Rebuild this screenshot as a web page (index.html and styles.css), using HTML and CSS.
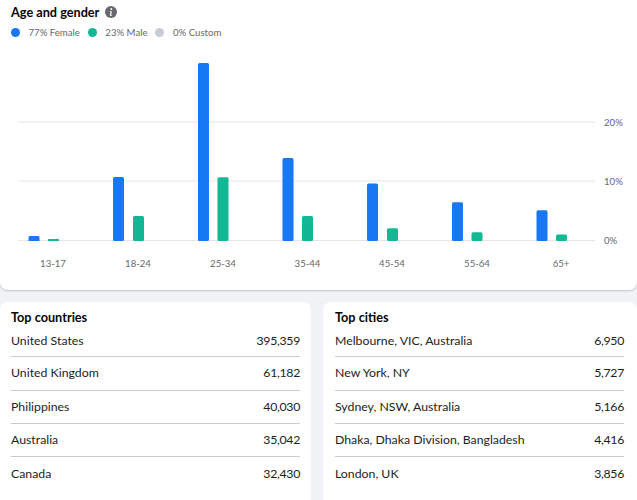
FILE: index.html
```html
<!DOCTYPE html>
<html lang="en">
<head>
<meta charset="utf-8">
<title>Audience</title>
<link rel="stylesheet" href="styles.css">
</head>
<body>
<section class="card chart-card">
  <h2 class="title">Age and gender
    <svg class="info" viewBox="0 0 12 12" width="12" height="12" aria-hidden="true"><circle cx="6" cy="6" r="6" fill="#65676b"/><circle cx="6.3" cy="3.1" r="1" fill="#fff"/><path d="M4.7 5.2h2.2L6.2 9h.9v.8H4.8L5.5 6h-.8z" fill="#fff"/></svg>
  </h2>
  <ul class="legend">
    <li class="legend-item"><span class="dot dot-female"></span>77% Female</li>
    <li class="legend-item"><span class="dot dot-male"></span>23% Male</li>
    <li class="legend-item"><span class="dot dot-custom"></span>0% Custom</li>
  </ul>
  <svg class="chart" viewBox="0 0 637 250" width="637" height="250" aria-label="Age and gender chart">
    <g class="grid">
      <line x1="18" x2="595" y1="82" y2="82"/>
      <line x1="18" x2="595" y1="141" y2="141"/>
      <line x1="18" x2="595" y1="200.5" y2="200.5"/>
    </g>
    <g class="ylabels">
      <text x="604" y="86">20%</text>
      <text x="604" y="145">10%</text>
      <text x="604" y="204">0%</text>
    </g>
    <g class="bars-f">
      <path d="M28.5 201v-3.5a1.5 1.5 0 0 1 1.5-1.5h8a1.5 1.5 0 0 1 1.5 1.5v3.500z"/>
      <rect x="113" y="137" width="11" height="64" rx="1.500"/>
      <rect x="198" y="23" width="11" height="178" rx="1.500"/>
      <rect x="282.500" y="118" width="11" height="83" rx="1.500"/>
      <rect x="367" y="143.500" width="11" height="57.500" rx="1.500"/>
      <rect x="452" y="162.300" width="11" height="38.700" rx="1.500"/>
      <rect x="536.500" y="170.300" width="11" height="30.700" rx="1.500"/>
    </g>
    <g class="bars-m">
      <rect x="48" y="199" width="11" height="2" rx="0.500"/>
      <rect x="133" y="176" width="11" height="25" rx="1.500"/>
      <rect x="217.500" y="137.300" width="11" height="63.700" rx="1.500"/>
      <rect x="302" y="176" width="11" height="25" rx="1.500"/>
      <rect x="387" y="188.300" width="11" height="12.700" rx="1.500"/>
      <rect x="471.500" y="192.300" width="11" height="8.700" rx="1.500"/>
      <rect x="556" y="194.500" width="11" height="6.500" rx="1.500"/>
    </g>
    <g class="xlabels">
      <text x="53" y="227">13-17</text>
      <text x="138" y="227">18-24</text>
      <text x="223" y="227">25-34</text>
      <text x="307.500" y="227">35-44</text>
      <text x="392" y="227">45-54</text>
      <text x="477" y="227">55-64</text>
      <text x="561" y="227">65+</text>
    </g>
  </svg>
</section>
<div class="columns">
  <section class="card list-card">
    <h2 class="title">Top countries</h2>
    <ul class="rows">
      <li class="row"><span>United States</span><span class="num">395,359</span></li>
      <li class="row"><span>United Kingdom</span><span class="num">61,182</span></li>
      <li class="row"><span>Philippines</span><span class="num">40,030</span></li>
      <li class="row"><span>Australia</span><span class="num">35,042</span></li>
      <li class="row"><span>Canada</span><span class="num">32,430</span></li>
    </ul>
  </section>
  <section class="card list-card">
    <h2 class="title">Top cities</h2>
    <ul class="rows">
      <li class="row"><span>Melbourne, VIC, Australia</span><span class="num">6,950</span></li>
      <li class="row"><span>New York, NY</span><span class="num">5,727</span></li>
      <li class="row"><span>Sydney, NSW, Australia</span><span class="num">5,166</span></li>
      <li class="row"><span>Dhaka, Dhaka Division, Bangladesh</span><span class="num">4,416</span></li>
      <li class="row"><span>London, UK</span><span class="num">3,856</span></li>
    </ul>
  </section>
</div>
</body>
</html>
```
FILE: styles.css
```css
* { box-sizing: border-box; }
html, body { margin: 0; height: 500px; overflow: hidden; }
body {
  background: #f0f2f5;
  font-family: "Lato", "Noto Sans", sans-serif;
  color: #1c1e21;
  width: 637px;
}
.card { background: #fff; }
.chart-card {
  height: 290px;
  padding-top: 4px;
  border-radius: 0 0 8px 8px;
  box-shadow: 0 1px 2px rgba(0,0,0,.2);
  overflow: hidden;
}
.title {
  margin: 0;
  padding-left: 11px;
  font-size: 12.700px;
  line-height: 16px;
  font-weight: 700;
  color: #050505;
  display: flex;
  align-items: center;
  gap: 6px;
}
.legend {
  list-style: none;
  margin: 4px 0 0;
  padding: 0 0 0 11px;
  display: flex;
  gap: 8px;
  height: 16px;
}
.legend-item {
  display: flex;
  align-items: center;
  gap: 8.500px;
  font-size: 9.600px;
  color: #65676b;
}
.dot { width: 9px; height: 9px; border-radius: 50%; }
.dot-female { background: #1877f2; }
.dot-male { background: #12b894; }
.dot-custom { background: #c8ccd4; }
.chart { display: block; }
.grid line { stroke: #e4e6e9; stroke-width: 1; }
.bars-f { fill: #1877f2; }
.bars-m { fill: #12b894; }
.ylabels text, .xlabels text { font-size: 9.600px; fill: #65676b; }
.xlabels text { text-anchor: middle; }
.columns {
  display: flex;
  gap: 12px;
  margin-top: 12px;
}
.list-card {
  flex: none;
  width: 311px;
  height: 198px;
  padding: 7px 11px 0;
  border-radius: 8px 8px 0 0;
}
.list-card + .list-card { width: 314px; padding-left: 12px; padding-right: 13px; }
.list-card .title { padding-left: 0; }
.rows { list-style: none; margin: 0; padding: 0; }
.row {
  display: flex;
  justify-content: space-between;
  align-items: center;
  height: 33.250px;
  padding-bottom: 1px;
  font-size: 12.300px;
  color: #1c1e21;
  border-bottom: 1px solid #c9ccd1;
}
.num { letter-spacing: -.3px; }
.row:first-child { height: 32.250px; }
.row:last-child { border-bottom: 0; }
```
